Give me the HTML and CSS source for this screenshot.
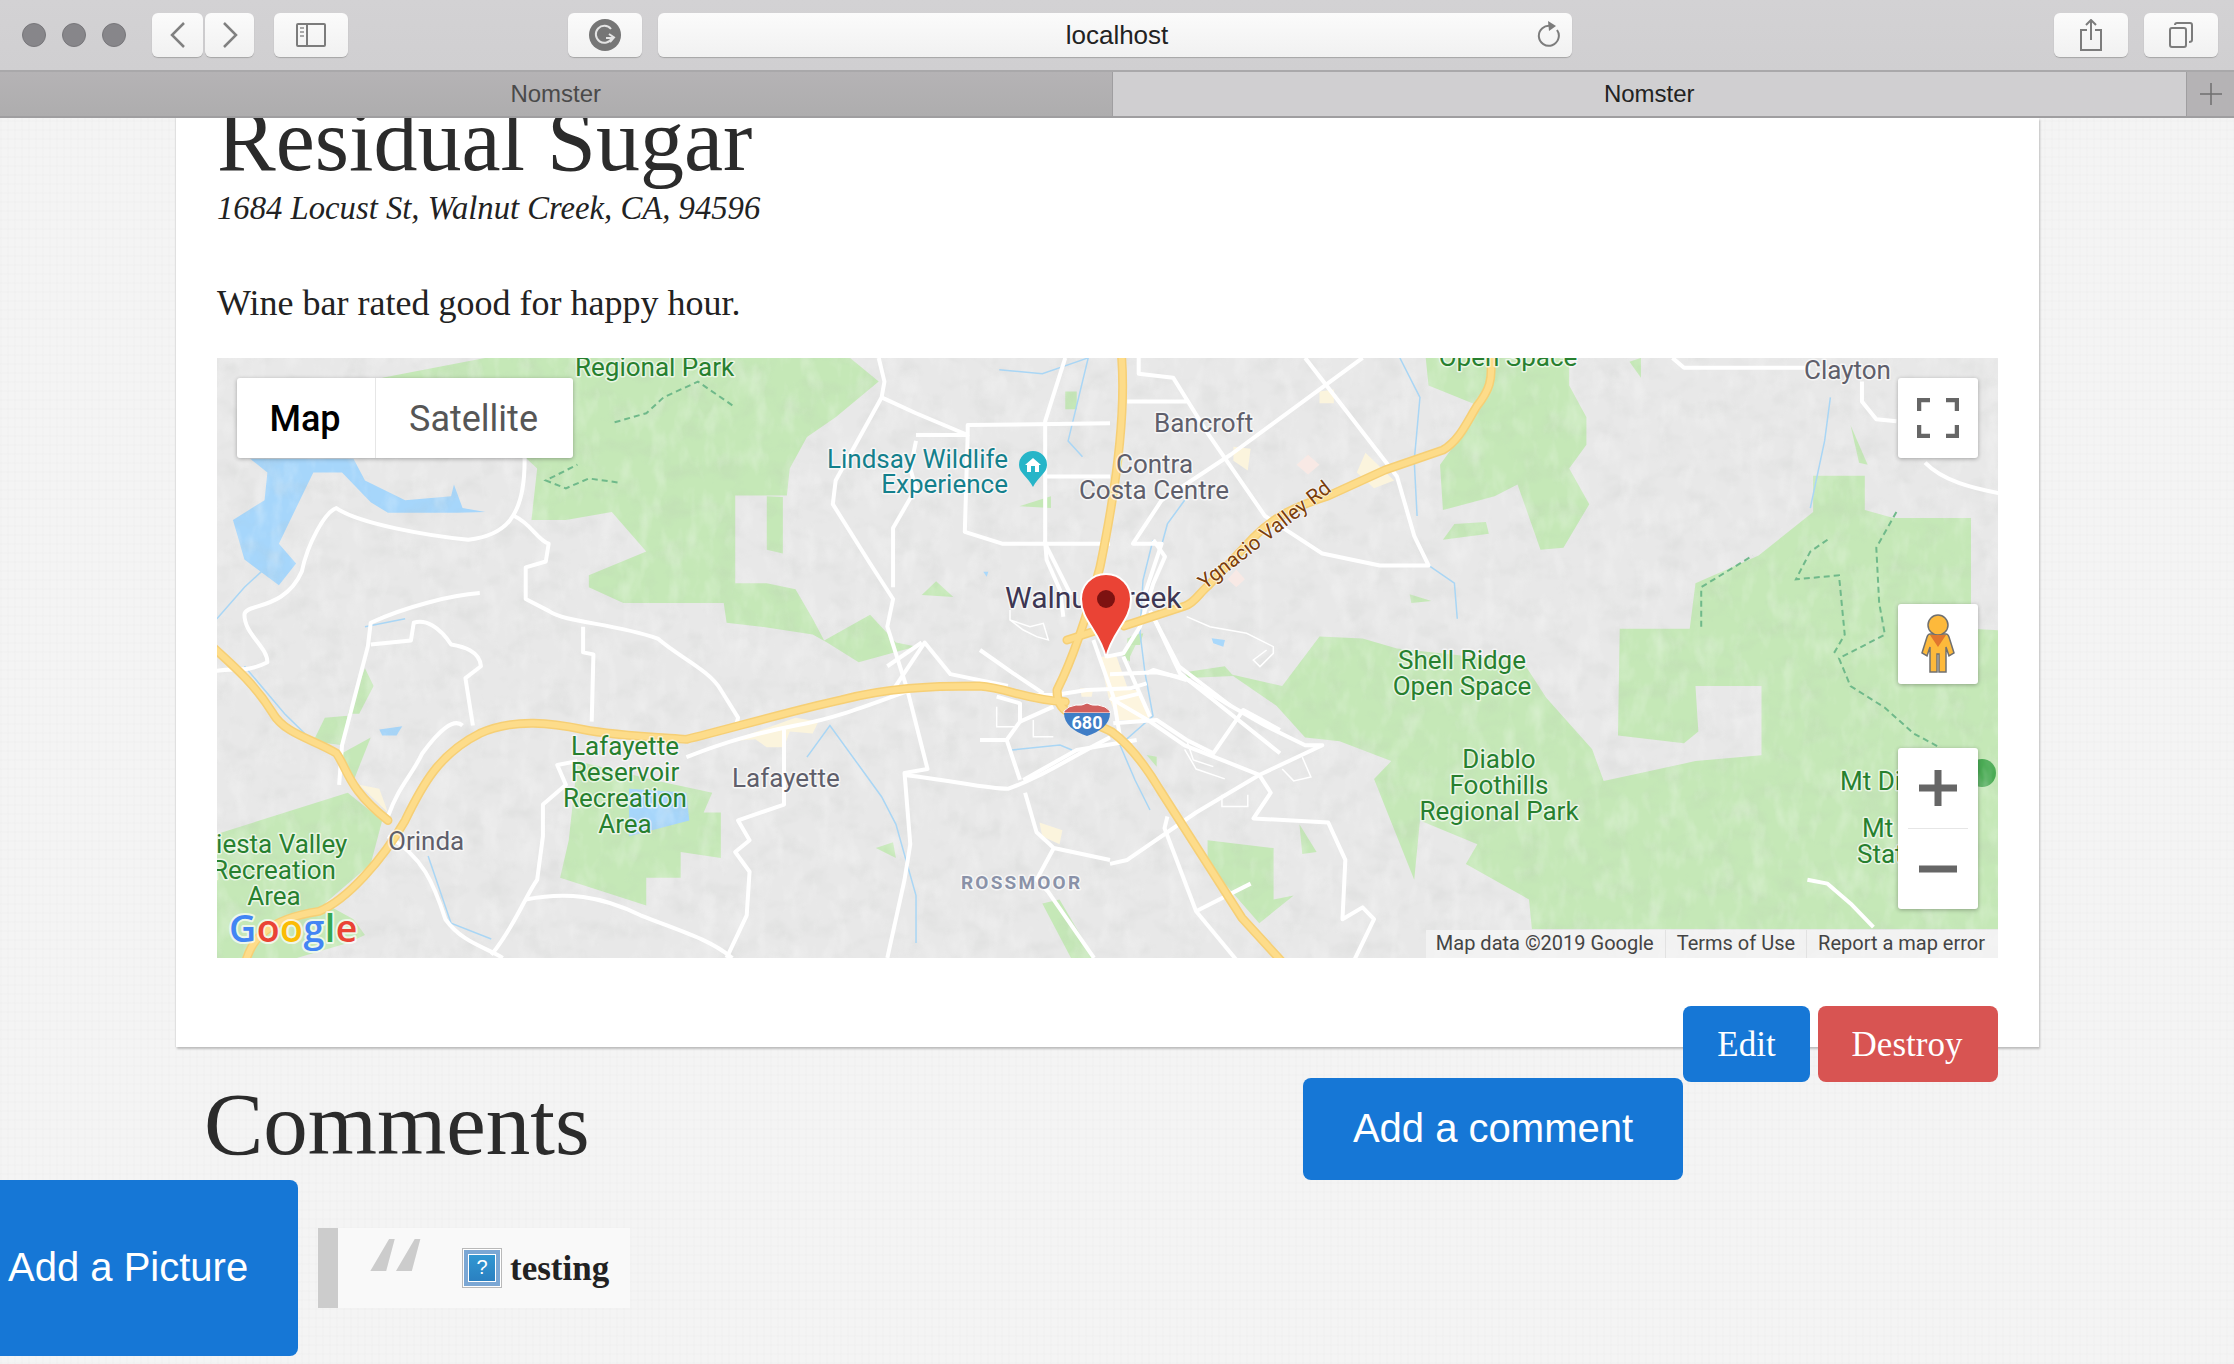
FILE: index.html
```html
<!DOCTYPE html>
<html>
<head>
  <meta charset="utf-8">
  <title>Nomster</title>
  <link rel="stylesheet" href="styles.css">
</head>
<body>
  <div class="toolbar">
    <div class="lights"><span class="light"></span><span class="light"></span><span class="light"></span></div>
    <div class="tool tool-back">
      <svg width="18" height="26" viewBox="0 0 18 26"><path class="icon-line" d="M15 1 L3 13 L15 25"/></svg>
    </div>
    <div class="tool tool-forward">
      <svg width="18" height="26" viewBox="0 0 18 26"><path class="icon-line" d="M3 1 L15 13 L3 25"/></svg>
    </div>
    <div class="tool tool-sidebar">
      <svg width="30" height="24" viewBox="0 0 30 24">
        <rect class="icon-thin" x="1" y="1" width="28" height="22" rx="1"/>
        <path class="icon-thin" d="M11 1 V23"/>
        <path class="icon-dots" d="M4 5 H8 M4 9 H8 M4 13 H8"/>
      </svg>
    </div>
    <div class="tool tool-grammarly">
      <svg width="32" height="32" viewBox="0 0 32 32">
        <circle cx="16" cy="16" r="16" fill="#767676"/>
        <path d="M22 10 A8.5 8.5 0 1 0 23 19 L17 19" fill="none" stroke="#e4e4e4" stroke-width="2"/>
        <path d="M20 15 L25 18.500 L21 23" fill="none" stroke="#e4e4e4" stroke-width="2"/>
      </svg>
    </div>
    <div class="address-bar">
      <span class="address-text">localhost</span>
      <svg class="reload" width="24" height="26" viewBox="0 0 24 26">
        <path class="icon-thin" d="M15 5 A10 10 0 1 0 21 9"/>
        <path d="M12 0 L20 5 L13 10 Z" fill="#7c7c7c"/>
      </svg>
    </div>
    <div class="tool tool-share">
      <svg width="24" height="32" viewBox="0 0 24 32">
        <path class="icon-thin" d="M8 11 H2 V31 H22 V11 H16"/>
        <path class="icon-thin" d="M12 1 V21 M7 6 L12 1 L17 6"/>
      </svg>
    </div>
    <div class="tool tool-tabs">
      <svg width="24" height="26" viewBox="0 0 24 26">
        <rect class="icon-thin" x="1" y="6" width="16" height="19" rx="2"/>
        <path class="icon-thin" d="M6 3 Q6 1 8 1 H21 Q23 1 23 3 V18 Q23 20 20 20"/>
      </svg>
    </div>
  </div>

  <div class="tabs">
    <div class="tab tab-inactive">Nomster</div>
    <div class="tab tab-active">Nomster</div>
    <div class="tab-add">
      <svg width="22" height="22" viewBox="0 0 22 22"><path d="M11 0 V22 M0 11 H22" stroke="#6f6f6f" stroke-width="1.500"/></svg>
    </div>
  </div>

  <div class="page">
    <div class="card">
      <h1 class="place-name">Residual Sugar</h1>
      <div class="place-address">1684 Locust St, Walnut Creek, CA, 94596</div>
      <p class="place-desc">Wine bar rated good for happy hour.</p>

      <div class="map">
        <svg class="map-art" width="1781" height="600" viewBox="217 358 1781 600">
          <defs>
            <filter id="hills" x="0" y="0" width="100%" height="100%">
              <feTurbulence type="fractalNoise" baseFrequency="0.035 0.05" numOctaves="3" seed="7"/>
              <feColorMatrix type="matrix" values="0 0 0 0 0.45  0 0 0 0 0.47  0 0 0 0 0.45  0 0 0 1.300 -0.620"/>
            </filter>
            <filter id="hills-light" x="0" y="0" width="100%" height="100%">
              <feTurbulence type="fractalNoise" baseFrequency="0.06 0.03" numOctaves="3" seed="21"/>
              <feColorMatrix type="matrix" values="0 0 0 0 1  0 0 0 0 1  0 0 0 0 1  0 0 0 2 -0.950"/>
            </filter>
            <g id="highways">
              <g transform="translate(210,350) scale(.574,.3953)">
                <path d="M60,1560 C70,1490 100,1440 190,1420 C240,1390 300,1290 340,1190 C370,1100 400,1020 470,970 C530,930 600,945 650,960 C700,975 780,980 830,985 C900,960 1020,910 1100,885 C1180,855 1250,850 1340,850 C1390,855 1420,885 1490,890"/>
                <path d="M0,745 C50,810 80,850 110,920 C130,970 180,985 220,1020 C240,1060 240,1110 310,1190"/>
              </g>
              <path d="M1121,350 C1126,400 1120,470 1100,567 C1078,650 1062,680 1057,690 C1057,700 1060,708 1068,712 C1080,720 1100,725 1112,732 C1130,745 1145,765 1160,790 L1242,918 L1285,965"/>
              <path d="M1067,640 L1098,630 M1124,626 L1185,606 C1195,603 1200,592 1208,586 L1253,538 C1275,515 1300,505 1328,496 L1385,470 L1443,450 C1460,440 1468,420 1477,406 C1488,392 1495,380 1489,350"/>
            </g>
          </defs>

          <rect x="217" y="358" width="1781" height="600" fill="#e8e8e8"/>

          <!-- parks -->
          <g class="parks" transform="translate(210,350) scale(.574,.3953)">
            <path d="M480,20 L1115,20 L1165,80 L1090,170 L1040,220 L1010,300 L1005,368 L915,368 L915,590 L970,590 L1020,605 L1050,680 L1070,735 L1150,670 L1195,740 L1230,750 L1130,790 L1075,740 L1050,720 L960,700 L900,690 L895,640 L790,640 L720,640 L660,600 L660,570 L760,510 L700,410 L620,430 L560,430 L570,300 L548,270 L300,70 Z"/>
            <path d="M970,370 L998,372 L998,515 L970,505 Z"/>
            <path d="M640,1040 L780,1090 L875,1120 L860,1170 L890,1170 L890,1285 L820,1270 L820,1335 L760,1335 L760,1405 L610,1335 L625,1240 Z"/>
            <path d="M0,1230 L240,1120 L300,1190 L280,1300 L200,1400 L250,1440 L270,1480 L240,1500 L100,1560 L0,1560 Z"/>
            <path d="M180,990 L200,930 L240,925 L230,1000 Z"/>
            <path d="M230,1020 L280,980 L250,1090 Z"/>
            <path d="M240,920 L270,805 L285,850 L260,920 Z"/>
            <path d="M1240,620 L1265,585 L1295,625 Z"/>
            <path d="M1410,395 L1465,370 L1465,400 Z"/>
            <path d="M1490,105 L1510,105 L1510,150 L1490,150 Z"/>
            <path d="M1450,1400 L1480,1390 L1540,1538 L1500,1538 Z"/>
            <path d="M1160,1260 L1190,1245 L1195,1285 Z"/>
          </g>
          <g class="parks" transform="translate(1110,350) scale(.574,.3953)">
            <path d="M550,20 L800,20 L800,90 L830,170 L830,240 L800,300 L835,390 L790,500 L750,505 L710,340 L670,370 L580,405 L575,290 L610,220 L640,140 L555,90 Z"/>
            <path d="M600,440 L655,435 L660,465 L580,480 Z"/>
            <path d="M365,725 L440,730 L500,755 L720,790 L760,880 L840,1010 L860,1090 L1020,1040 L1135,1025 L1135,850 L1020,850 L1025,965 L1000,995 L885,975 L888,705 L1010,705 L1020,590 L1130,520 L1225,410 L1225,318 L1315,318 L1315,405 L1365,425 L1500,425 L1500,705 L1560,710 L1560,1465 L735,1465 L730,1390 L620,1300 L640,1250 L540,1190 L530,1340 L460,1085 L490,1040 L400,990 L340,980 L290,900 L210,820 L300,850 Z"/>
            <path d="M130,815 L200,800 L215,825 L135,830 Z"/>
            <path d="M170,1240 L285,1260 L285,1390 L320,1380 L260,1450 L170,1300 Z"/>
            <path d="M330,1200 L360,1270 L335,1275 Z"/>
            <path d="M905,30 L925,20 L925,70 Z"/>
            <path d="M522,618 L560,635 L525,640 Z"/>
            <path d="M1290,190 L1320,290 L1305,285 Z"/>
            <path d="M30,730 L55,715 L30,790 Z"/>
          </g>
          <circle cx="1982" cy="773" r="14" fill="#4bab55"/>

          <!-- water -->
          <g class="water" transform="translate(210,350) scale(.574,.3953)">
            <path d="M70,275 L250,275 L270,330 L340,380 L420,370 L425,340 L440,400 L480,410 L430,412 L310,412 L280,385 L230,310 L180,310 L150,400 L120,490 L150,540 L120,595 L60,530 L40,430 L95,380 L100,310 Z"/>
            <path d="M295,960 L335,952 L325,975 L300,975 Z"/>
            <path d="M730,1110 L830,1120 L835,1190 L730,1230 Z"/>
          </g>

          <rect x="217" y="358" width="1781" height="600" filter="url(#hills)" opacity=".25"/>
          <rect x="217" y="358" width="1781" height="600" filter="url(#hills-light)" opacity=".3"/>

          <!-- town centre -->
          <g transform="translate(980,540) scale(.3333)">
            <path d="M360,350 L410,350 L445,450 L480,450 L510,540 L415,540 L385,470 Z" fill="#fdf5df"/>
            <path d="M300,445 L340,445 L335,470 L305,470 Z" fill="#fdf5df"/>
            <path d="M450,290 L490,280 L480,315 L450,315 Z M420,340 L450,320 L450,365 Z M500,645 L530,650 L530,680 Z" fill="#c5e8b7"/>
            <path d="M695,295 L735,300 L730,320 L700,310 Z M10,95 L25,95 L20,110 Z" fill="#a9d8fb"/>
          </g>
          <g transform="translate(210,350) scale(.574,.3953)" fill="#fbf4dd">
            <path d="M905,990 L1020,930 L1060,940 L1050,970 L1010,965 L1000,1005 L970,1005 L950,985 Z"/>
            <path d="M260,1100 L295,1110 L310,1170 Z"/>
            <path d="M1445,1195 L1485,1215 L1480,1250 L1450,1230 Z"/>
          </g>
          <g transform="translate(1110,350) scale(.574,.3953)">
            <path d="M215,245 L245,250 L240,305 L215,280 Z M365,105 L390,100 L390,135 L365,135 Z M445,260 L495,330 L460,350 L430,310 Z" fill="#fbf4dd"/>
            <path d="M345,265 L365,290 L345,315 L325,290 Z M220,555 L235,580 L220,600 L205,580 Z" fill="#f8e9e5"/>
          </g>

          <!-- streams -->
          <g class="streams" transform="translate(210,350) scale(.574,.3953)">
            <path d="M12,680 L60,600 L90,560"/>
            <path d="M60,800 L130,920 L165,970"/>
            <path d="M1040,1030 L1080,950 L1130,1050 L1170,1130 L1195,1200 L1230,1380 L1230,1500"/>
            <path d="M380,1280 L420,1450 L490,1490"/>
            <path d="M1375,50 L1450,60 L1530,20 L1495,230 L1520,270"/>
            <path d="M270,700 L340,680"/>
          </g>
          <g class="streams" transform="translate(1110,350) scale(.574,.3953)">
            <path d="M505,20 L540,120 L530,280 L535,420"/>
            <path d="M555,545 L600,590 L605,680"/>
            <path d="M1255,120 L1245,230 L1220,400"/>
            <path d="M130,380 L100,440 L85,520"/>
          </g>
          <path class="streams" d="M1153,540 L1143,580 L1140,633 L1145,673 L1153,716 L1120,745 L1135,780 L1150,810"/>
          <path class="streams" d="M1012,750 L1060,745 L1072,750"/>

          <!-- roads -->
          <g class="roads" transform="translate(210,350) scale(.574,.3953)">
            <path d="M0,815 C40,800 60,820 100,790 C100,750 60,720 60,670 C60,640 130,660 160,560 C170,490 200,410 220,400 C260,440 380,470 450,480 C510,470 550,430 548,270"/>
            <path d="M530,420 C560,440 570,480 590,490 L585,535 L550,550 L550,630 L590,660 C620,690 700,690 780,730 C820,780 870,810 890,860 L920,930 L915,960"/>
            <path d="M650,700 L650,765 L668,770 L665,940"/>
            <path d="M470,615 C420,620 340,650 280,690 L275,750 L230,1000 L225,1100"/>
            <path d="M280,745 L350,735 L355,690 C375,680 400,700 420,745 C440,750 470,760 472,800 L445,830 L458,950"/>
            <path d="M440,950 C425,930 400,960 370,1020 C350,1080 330,1100 310,1180"/>
            <path d="M310,1230 C370,1280 390,1350 410,1440 C440,1500 480,1510 510,1538"/>
            <path d="M490,1530 C530,1460 550,1380 570,1340 L580,1230 L580,1150 L620,1100 L605,1050 L640,1040"/>
            <path d="M830,1030 C900,990 950,970 1020,950 C1100,930 1180,880 1240,850"/>
            <path d="M1000,960 L1000,1150 L920,1190 L940,1240 L915,1270 L940,1320 L935,1430 L900,1538"/>
            <path d="M550,1390 C620,1370 680,1380 750,1430 C820,1470 870,1490 910,1538"/>
            <path d="M1165,20 L1175,80 L1170,120 L1090,330 L1085,390 L1150,540 L1190,630 L1180,700 L1215,860 L1250,1060 L1210,1070 L1220,1250 L1210,1340 L1180,1538"/>
            <path d="M1170,120 L1230,160 L1320,215 L1320,190 L1568,185"/>
            <path d="M1320,215 L1315,460 L1380,490 L1568,490"/>
            <path d="M1230,215 L1320,215 M1230,230 L1220,300 L1230,350 L1190,450 L1190,600"/>
            <path d="M1490,20 L1455,180 L1455,320 L1568,320 M1455,320 L1455,490 L1500,620"/>
            <path d="M1210,1075 C1300,1090 1350,1110 1390,1110 C1450,1080 1500,1030 1568,980"/>
            <path d="M1420,1120 L1440,1220 L1470,1260 L1568,1290 M1470,1260 L1440,1340 L1460,1370 L1540,1538"/>
            <path d="M1190,860 L1245,740 L1290,820 L1390,850"/>
            <path d="M1240,740 L1180,800"/>
          </g>
          <g class="roads" transform="translate(1110,350) scale(.574,.3953)">
            <path d="M30,130 L135,130 M50,20 L50,60 L110,70 L170,210 L270,420 L370,515 L470,545 L555,545 L530,470 L500,320 L340,20"/>
            <path d="M440,20 L210,265 L90,380 L40,490 L90,490 L60,620"/>
            <path d="M70,660 L120,800 L210,900 L270,950 L340,1000 L370,1000 L260,1075 L150,1170 L30,1290 L0,1300"/>
            <path d="M0,880 L70,940 L130,1000 L200,1040 L260,1075 L280,1120 L250,1185 L380,1195 L410,1290 L405,1440 L440,1410 L460,1440 L420,1560"/>
            <path d="M0,820 L80,815 L130,830 L210,900"/>
            <path d="M100,1180 L95,1210 L150,1420 L230,1560 M150,1420 L245,1350"/>
            <path d="M980,20 L1000,45 L1220,45 M1310,80 L1310,130 L1335,175 L1370,180 M1420,285 C1450,330 1500,350 1560,365"/>
            <path d="M1215,1340 L1250,1350 L1290,1400 L1330,1460"/>
          </g>
          <g class="roads" transform="translate(980,540) scale(.3333)">
            <path d="M195,0 L200,60 L240,150 L250,230"/>
            <path d="M520,0 L555,50 L520,130 L480,260 L430,340 L380,350"/>
            <path d="M340,300 L400,470 L420,590 M430,350 L510,530"/>
            <path d="M0,330 L100,400 L190,460 M100,465 L225,465 L320,450 L450,445 L500,430"/>
            <path d="M400,480 L480,460 M120,545 L220,500"/>
            <path d="M400,550 L530,540 L620,600 L700,640 L790,510 L900,570"/>
            <path d="M520,230 L600,400 L700,480 L900,640"/>
            <path d="M500,400 L520,390 L620,420"/>
            <path d="M80,600 L120,720 M130,720 L290,630 L470,600"/>
            <path d="M120,545 L80,600 L0,600 M50,470 L120,490 L120,545"/>
          </g>
          <g class="lanes" transform="translate(980,540) scale(.3333)">
            <path d="M90,210 L90,240 L150,260 L190,250 L205,300 L170,290 L130,270 L90,240"/>
            <path d="M620,230 L690,260 L800,280 L880,320 L880,340 L840,380 L820,360 L860,330"/>
            <path d="M160,540 L160,590 L220,590 M620,600 L640,660 L700,680 M50,500 L50,560 L110,560"/>
          </g>
          <g class="lanes" transform="translate(1110,350) scale(.574,.3953)">
            <path d="M130,1010 L150,1060 L200,1085 M195,1125 L195,1155 L240,1155 L240,1125 M300,1060 L320,1090 L350,1080 L335,1030"/>
          </g>

          <!-- highways -->
          <use href="#highways" class="hw-edge"/>
          <use href="#highways" class="hw-core"/>

          <!-- trails -->
          <g class="trails" transform="translate(210,350) scale(.574,.3953)">
            <path d="M910,140 L850,80 L790,120 L760,160 L700,185"/>
            <path d="M710,335 L660,325 L620,350 L585,330 L640,290"/>
          </g>
          <g class="trails" transform="translate(1110,350) scale(.574,.3953)">
            <path d="M1370,410 L1335,500 L1340,640 L1350,720 L1270,780 L1290,850 L1350,905 L1400,970 L1445,1005"/>
            <path d="M1030,700 L1030,600 L1120,520 M1250,480 L1220,510 L1195,580 L1270,570 L1280,720 L1260,770"/>
          </g>

          <!-- labels -->
          <g class="labels">
            <text class="lb-park" x="575" y="376">Regional Park</text>
            <text class="lb-poi lb-end" x="1008" y="468">Lindsay Wildlife</text>
            <text class="lb-poi lb-end" x="1008" y="493">Experience</text>
            <text class="lb-town" x="1154" y="432">Bancroft</text>
            <text class="lb-town" x="1116" y="473">Contra</text>
            <text class="lb-town lb-mid" x="1154" y="499">Costa Centre</text>
            <text class="lb-city" x="1005" y="608">Walnut Creek</text>
            <text class="lb-road" transform="translate(1205,590) rotate(-38)">Ygnacio Valley Rd</text>
            <text class="lb-park lb-mid" x="1462" y="669">Shell Ridge</text>
            <text class="lb-park lb-mid" x="1462" y="695">Open Space</text>
            <text class="lb-park lb-mid" x="1499" y="768">Diablo</text>
            <text class="lb-park lb-mid" x="1499" y="794">Foothills</text>
            <text class="lb-park lb-mid" x="1499" y="820">Regional Park</text>
            <text class="lb-park lb-mid" x="1508" y="366">Open Space</text>
            <text class="lb-town" x="1804" y="379">Clayton</text>
            <text class="lb-park" x="1840" y="790">Mt Diablo</text>
            <text class="lb-park" x="1862" y="837">Mt</text>
            <text class="lb-park" x="1857" y="863">State</text>
            <text class="lb-park lb-mid" x="625" y="755">Lafayette</text>
            <text class="lb-park lb-mid" x="625" y="781">Reservoir</text>
            <text class="lb-park lb-mid" x="625" y="807">Recreation</text>
            <text class="lb-park lb-mid" x="625" y="833">Area</text>
            <text class="lb-town" x="732" y="787">Lafayette</text>
            <text class="lb-town" x="388" y="850">Orinda</text>
            <text class="lb-park lb-mid" x="274" y="853">Siesta Valley</text>
            <text class="lb-park lb-mid" x="274" y="879">Recreation</text>
            <text class="lb-park lb-mid" x="274" y="905">Area</text>
            <text class="lb-area" x="961" y="889">ROSSMOOR</text>
          </g>

          <!-- lindsay poi -->
          <path d="M1033,465 m-14,0 a14,14 0 1 1 28,0 c0,8 -9,12 -14,22 c-5,-10 -14,-14 -14,-22 z" fill="#26b5c8"/>
          <path d="M1025,465 L1033,458 L1041,465 L1039,465 L1039,472 L1027,472 L1027,465 Z" fill="#fff"/>
          <rect x="1031" y="466" width="4" height="6" fill="#26b5c8"/>

          <!-- 680 shield -->
          <path d="M1064,711 Q1068,706 1076,705 Q1082,706 1087,703 Q1092,706 1098,705 Q1106,706 1110,711 L1110,713 L1064,713 Z" fill="#d1605e" stroke="#fff" stroke-width="1"/>
          <path d="M1064,713 H1110 C1110,724 1100,732 1087,736 C1074,732 1064,724 1064,713 Z" fill="#3f7dc6"/>
          <text class="shield-num" x="1087" y="729">680</text>

          <!-- pin -->
          <path d="M1106,574 C1091,574 1081,586 1081,599 C1081,621 1100,631 1106,658 C1112,631 1131,621 1131,599 C1131,586 1121,574 1106,574 Z" fill="#ea4335" stroke="#fff" stroke-width="2"/>
          <circle cx="1106" cy="599" r="9" fill="#7d1211"/>

          <!-- logo -->
          <text class="logo" x="229" y="942"><tspan fill="#4285f4">G</tspan><tspan fill="#ea4335">o</tspan><tspan fill="#fbbc05">o</tspan><tspan fill="#4285f4">g</tspan><tspan fill="#34a853">l</tspan><tspan fill="#ea4335">e</tspan></text>
        </svg>

        <div class="map-type">
          <div class="map-type-btn map-type-on">Map</div>
          <div class="map-type-btn">Satellite</div>
        </div>

        <div class="map-ctl ctl-full">
          <svg width="42" height="40" viewBox="-2 -2 42 40"><path d="M0 11 V0 H11 M27 0 H38 V11 M38 25 V36 H27 M11 36 H0 V25" fill="none" stroke="#666" stroke-width="4.500"/></svg>
        </div>
        <div class="map-ctl ctl-peg">
          <svg width="36" height="60" viewBox="0 0 36 60">
            <path d="M10 20 H26 Q28 20 29 23 L34 39 L29 42 L26 33 V58 H19 V40 H17 V58 H10 V33 L7 42 L2 39 L7 23 Q8 20 10 20 Z" fill="#fdb93b" stroke="#707070" stroke-width="1.500"/>
            <circle cx="18" cy="11" r="10" fill="#fdb93b" stroke="#707070" stroke-width="1.500"/>
            <path d="M10 21 H26 L18 33 Z" fill="#e0762e"/>
          </svg>
        </div>
        <div class="map-ctl ctl-zoom">
          <div class="zoom-btn">
            <svg width="38" height="36" viewBox="0 0 38 36"><path d="M0 18 H38 M19 0 V36" stroke="#666" stroke-width="7"/></svg>
          </div>
          <div class="zoom-line"></div>
          <div class="zoom-btn">
            <svg width="38" height="8" viewBox="0 0 38 8"><path d="M0 4 H38" stroke="#666" stroke-width="7"/></svg>
          </div>
        </div>

        <div class="map-foot">
          <span class="foot-item">Map data ©2019 Google</span>
          <span class="foot-item">Terms of Use</span>
          <span class="foot-item">Report a map error</span>
        </div>
      </div>

      <div class="place-actions">
        <a class="btn btn-blue btn-serif btn-edit">Edit</a>
        <a class="btn btn-red btn-serif btn-destroy">Destroy</a>
      </div>
    </div>

    <div class="comments-head">
      <h1 class="comments-title">Comments</h1>
      <a class="btn btn-blue btn-big btn-comment">Add a comment</a>
    </div>

    <div class="comments-body">
      <a class="btn btn-blue btn-big btn-picture">Add a Picture</a>
      <div class="comment-quote">
        <span class="quote-mark">"</span>
        <span class="rating-icon"><span class="rating-inner">?</span></span>
        <span class="comment-text">testing</span>
      </div>
    </div>
  </div>
</body>
</html>
```

FILE: styles.css
```css
html, body {
  margin: 0;
  height: 100%;
}
body {
  width: 2234px;
  height: 1364px;
  overflow: hidden;
  background-color: #f4f4f4;
  font-family: "Liberation Sans", Arial, sans-serif;
}

/* browser chrome */
.toolbar {
  display: flex;
  align-items: center;
  height: 70px;
  padding-left: 22px;
  background: linear-gradient(#d3d2d4, #d0cfd1);
  border-bottom: 2px solid #a9a8aa;
}
.lights {
  display: flex;
  gap: 16px;
  margin-right: 26px;
}
.light {
  width: 22px;
  height: 22px;
  border: 1px solid #77767a;
  border-radius: 50%;
  background-color: #87868a;
}
.tool,
.address-bar {
  display: flex;
  align-items: center;
  justify-content: center;
  height: 44px;
  border-radius: 6px;
  background: linear-gradient(#fbfbfb, #f1f1f1);
  box-shadow: 0 1px 1px #a5a5a5;
}
.tool { width: 74px; }
.tool-back { width: 51px; margin-right: 2px; }
.tool-forward { width: 49px; margin-right: 20px; }
.tool-grammarly { margin-left: 220px; margin-right: 16px; }
.tool-share { margin-left: 482px; margin-right: 16px; }
.address-bar {
  position: relative;
  width: 914px;
}
.address-text {
  padding-left: 4px;
  font-size: 26px;
  color: #222;
}
.reload {
  position: absolute;
  right: 12px;
  top: 8px;
}
.icon-line {
  fill: none;
  stroke: #808080;
  stroke-width: 2.5;
}
.icon-thin {
  fill: none;
  stroke: #7c7c7c;
  stroke-width: 2;
}
.icon-dots {
  fill: none;
  stroke: #a8a8a8;
  stroke-width: 2;
}

.tabs {
  display: flex;
  height: 44px;
  border-bottom: 2px solid #9f9ea0;
  font-size: 24px;
  line-height: 44px;
  text-align: center;
}
.tab-inactive {
  width: 1113px;
  box-sizing: border-box;
  background: linear-gradient(#b5b3b5, #aeadae);
  border-right: 1px solid #9f9ea0;
  color: #4a4a4a;
}
.tab-active {
  width: 1074px;
  background-color: #d0cfd1;
  color: #222;
}
.tab-add {
  display: flex;
  align-items: center;
  justify-content: center;
  width: 47px;
  background-color: #b5b3b5;
  border-left: 1px solid #9f9ea0;
}

/* page */
.page {
  height: 1246px;
  overflow: hidden;
  background-color: #f4f4f4;
  background-image:
    repeating-linear-gradient(90deg, rgba(0, 0, 0, 0.007) 0 2px, rgba(255, 255, 255, 0.02) 2px 7px),
    repeating-linear-gradient(0deg, rgba(0, 0, 0, 0.007) 0 2px, rgba(255, 255, 255, 0.02) 2px 9px);
}
.card {
  display: flow-root;
  width: 1781px;
  margin-left: 176px;
  padding: 0 41px;
  background-color: #fff;
  box-shadow: 1px 2px 2px #bdbdbd, -1px 0 1px #e2e2e2;
  font-family: "Liberation Serif", "Times New Roman", serif;
  color: #222;
}
.place-name {
  margin: -27px 0 -3px;
  font-size: 88px;
  font-weight: normal;
  line-height: 100px;
  color: #2b2b2b;
}
.place-address {
  font-size: 32.700px;
  font-style: italic;
  line-height: 40px;
}
.place-desc {
  margin: 53px 0 33px;
  font-size: 36px;
  line-height: 44px;
}

/* map */
.map {
  position: relative;
  height: 600px;
  overflow: hidden;
  font-family: Roboto, Arial, sans-serif;
}
.map-art { display: block; }
.parks path { fill: #c5e8b7; }
.water path { fill: #a6d6fb; }
.roads path {
  fill: none;
  stroke: #fff;
  stroke-width: 4;
  stroke-linejoin: round;
  vector-effect: non-scaling-stroke;
}
.lanes path {
  fill: none;
  stroke: #fff;
  stroke-width: 1.5;
  vector-effect: non-scaling-stroke;
}
.streams path,
path.streams {
  fill: none;
  stroke: #a9d6f5;
  stroke-width: 1.5;
  vector-effect: non-scaling-stroke;
}
.trails path {
  fill: none;
  stroke: #6fb98a;
  stroke-width: 2;
  stroke-dasharray: 6 4;
  vector-effect: non-scaling-stroke;
}
.hw-edge,
.hw-core {
  fill: none;
  stroke-linecap: round;
  stroke-linejoin: round;
}
.hw-edge { stroke: #f6cf75; stroke-width: 9; }
.hw-core { stroke: #fddc8a; stroke-width: 6; }
#highways path { vector-effect: non-scaling-stroke; }

.labels text {
  font-family: Roboto, Arial, sans-serif;
  font-size: 26px;
  paint-order: stroke;
  stroke: rgba(255, 255, 255, 0.65);
  stroke-width: 3px;
  stroke-linejoin: round;
}
.lb-park { fill: #27802f; }
.lb-poi { fill: #14808c; }
.lb-town { fill: #5f5f6b; }
.labels .lb-city { fill: #3d3653; font-size: 30px; }
.labels .lb-road { fill: #7a3d0c; font-size: 20.500px; stroke-width: 2px; }
.labels .lb-area {
  fill: #8a92a8;
  font-size: 19px;
  font-weight: 700;
  letter-spacing: 2.2px;
}
.lb-mid { text-anchor: middle; }
.lb-end { text-anchor: end; }
.shield-num {
  font-family: Roboto, Arial, sans-serif;
  font-size: 18px;
  font-weight: 700;
  fill: #fff;
  text-anchor: middle;
}
.logo {
  font-family: "Open Sans", Arial, sans-serif;
  font-size: 37.500px;
  font-weight: 600;
  letter-spacing: 0.5px;
  paint-order: stroke;
  stroke: rgba(255, 255, 255, 0.7);
  stroke-width: 4px;
  stroke-linejoin: round;
}

.map-type {
  position: absolute;
  left: 20px;
  top: 20px;
  display: flex;
  height: 80px;
  background-color: #fff;
  border-radius: 3px;
  box-shadow: 0 1px 4px rgba(0, 0, 0, 0.3);
  font-size: 36px;
  line-height: 83px;
  color: #565656;
}
.map-type-btn {
  width: 195px;
  padding-right: 2px;
  text-align: center;
}
.map-type-on {
  width: 136px;
  border-right: 1px solid #e6e6e6;
  font-weight: 500;
  color: #000;
}
.map-ctl {
  position: absolute;
  left: 1681px;
  display: flex;
  flex-direction: column;
  align-items: center;
  justify-content: center;
  width: 80px;
  background-color: #fff;
  border-radius: 3px;
  box-shadow: 0 1px 4px rgba(0, 0, 0, 0.3);
}
.ctl-full { top: 20px; height: 80px; }
.ctl-peg { top: 246px; height: 80px; }
.ctl-zoom { top: 390px; height: 161px; }
.zoom-btn {
  display: flex;
  align-items: center;
  justify-content: center;
  height: 80px;
}
.zoom-line {
  width: 60px;
  height: 1px;
  background-color: #e6e6e6;
}
.map-foot {
  position: absolute;
  right: 0;
  bottom: 0;
  display: flex;
  height: 28px;
  padding-right: 2px;
  background-color: rgba(245, 245, 245, 0.75);
  font-size: 20px;
  line-height: 26px;
  color: #444;
}
.foot-item {
  padding: 0 11px;
  border-left: 1px solid #e2e2e2;
}
.foot-item:first-child {
  padding-left: 10px;
  border-left: none;
}

/* buttons */
.btn {
  display: flex;
  align-items: center;
  justify-content: center;
  box-sizing: border-box;
  border-radius: 8px;
  color: #fff;
}
.btn-blue { background-color: #1677d6; }
.btn-red { background-color: #d85452; }
.btn-serif {
  height: 76px;
  padding-top: 2px;
  font-size: 35px;
}
.btn-big {
  padding-bottom: 2px;
  font-family: "Liberation Sans", Arial, sans-serif;
  font-size: 40px;
}
.place-actions {
  position: relative;
  display: flex;
  justify-content: flex-end;
  gap: 8px;
  margin: 48px 0 -35px;
}
.btn-edit { width: 127px; }
.btn-destroy { width: 180px; padding-right: 2px; }

/* comments */
.comments-head {
  display: flex;
  align-items: flex-start;
  width: 1683px;
  margin-top: 31px;
}
.comments-title {
  margin: -4px 0 0 204px;
  font-family: "Liberation Serif", "Times New Roman", serif;
  font-size: 89px;
  font-weight: normal;
  line-height: 100px;
  color: #2b2b2b;
}
.btn-comment {
  width: 380px;
  height: 102px;
  margin-left: auto;
}
.comments-body {
  display: flex;
  align-items: flex-start;
}
.btn-picture {
  justify-content: flex-start;
  width: 298px;
  height: 176px;
  padding-left: 8px;
  border-radius: 0 8px 8px 0;
}
.comment-quote {
  display: flex;
  align-items: center;
  width: 292px;
  height: 80px;
  margin: 48px 0 0 20px;
  border-left: 20px solid #ccc;
  background-color: #f9f9f9;
  font-family: "Liberation Serif", "Times New Roman", serif;
}
/* the mark is turned over so the heavy end sits at the bottom */
.quote-mark {
  flex: none;
  width: 124px;
  height: 80px;
  padding-right: 24px;
  box-sizing: border-box;
  font-size: 136px;
  font-style: italic;
  font-weight: bold;
  line-height: 160px;
  text-align: right;
  color: #ccc;
  transform: rotate(180deg) skewX(-14deg);
}
.rating-icon {
  display: flex;
  flex: none;
  box-sizing: border-box;
  width: 40px;
  height: 40px;
  padding: 1px;
  border: 1px solid #b9b9b9;
  background-color: #fff;
}
.rating-inner {
  flex: 1;
  border: 4px solid #7ba7d4;
  background: linear-gradient(#3198d3, #2a7fc0);
  box-shadow: inset 0 0 0 1px #fff;
  font-family: "Liberation Sans", Arial, sans-serif;
  font-size: 20px;
  line-height: 26px;
  text-align: center;
  color: #fff;
}
.comment-text {
  margin-left: 8px;
  padding-top: 2px;
  font-size: 35px;
  font-weight: bold;
  color: #222;
}
```
